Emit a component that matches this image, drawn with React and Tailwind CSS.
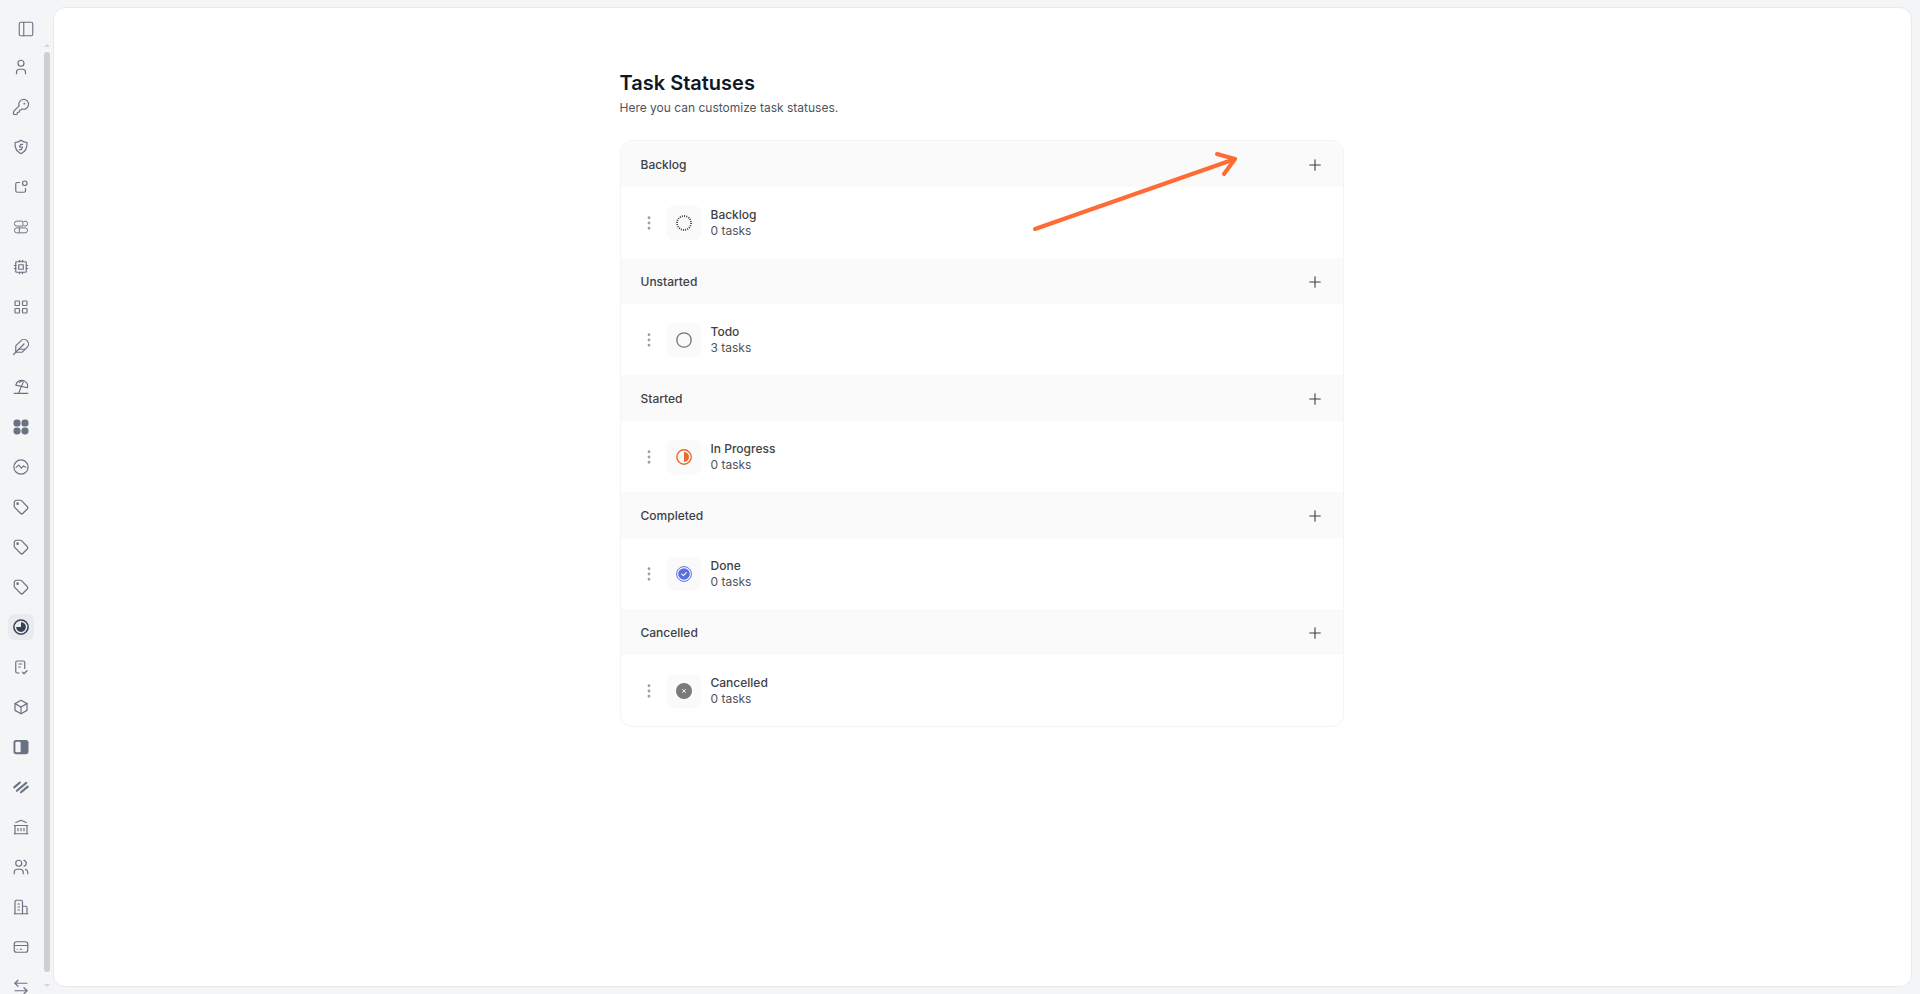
import { Plus, EllipsisVertical, PanelLeft, KeyRound, ArrowLeftRight, Feather } from 'lucide-react'
import {
  TbUser,
  TbNotification,
  TbCpu,
  TbLayoutGrid,
  TbTag,
  TbChecklist,
  TbBox,
  TbBuildingBank,
  TbUsers,
  TbCreditCard,
} from 'react-icons/tb'

function ShieldBolt({ size, strokeWidth, ...props }) {
  return (
    <svg viewBox="0 0 24 24" fill="none" stroke="currentColor" strokeWidth="1.6" strokeLinecap="round" strokeLinejoin="round" {...props}>
      <path d="M12 3c2.3 2 5 3 8 3 .5 6.5-2 12-8 15-6-3-8.5-8.5-8-15 3 0 5.7-1 8-3z" />
      <path d="M14 8.5h-2.5L10 12h4l-1.5 3.5H10" />
    </svg>
  )
}

function Pills({ size, strokeWidth, ...props }) {
  return (
    <svg viewBox="0 0 24 24" fill="none" stroke="currentColor" strokeWidth="1.3" {...props}>
      <path d="M14.500 4.200H6.500a3.300 3.300 0 0 0 0 6.600h8" />
      <circle cx="17.500" cy="7.500" r="3.300" />
      <rect x="3.200" y="13.200" width="17.600" height="6.600" rx="3.300" />
      <path d="M9.800 13.200v6.600" />
    </svg>
  )
}

function Umbrella({ size, strokeWidth, ...props }) {
  return (
    <svg viewBox="0 0 24 24" fill="none" stroke="currentColor" strokeWidth="1.5" strokeLinecap="round" strokeLinejoin="round" {...props}>
      <path d="M5 9.500C6 4 12.500 1.500 17.500 4.500c3 2 4 5 3 8.500z" />
      <path d="M10 6c1-1.500 3-2.500 5-2.500M12.500 11.200 15 5.500" />
      <path d="M12.500 11.200 9 20" />
      <path d="M3 20.500h18" />
    </svg>
  )
}

function Clover({ size, strokeWidth, ...props }) {
  return (
    <svg viewBox="0 0 24 24" fill="currentColor" {...props}>
      <rect x="2" y="2" width="9.400" height="9.400" rx="4.200" />
      <rect x="12.600" y="2" width="9.400" height="9.400" rx="4.200" />
      <rect x="2" y="12.600" width="9.400" height="9.400" rx="4.200" />
      <rect x="12.600" y="12.600" width="9.400" height="9.400" rx="4.200" />
    </svg>
  )
}

function WaveCircle({ size, strokeWidth, ...props }) {
  return (
    <svg viewBox="0 0 24 24" fill="none" stroke="currentColor" strokeWidth="1.6" strokeLinecap="round" strokeLinejoin="round" {...props}>
      <circle cx="12" cy="12" r="9.500" />
      <path d="M5.500 12.500 9 9.500l3.500 4 3-3 3 2" />
    </svg>
  )
}

function PieCircle({ size, strokeWidth, ...props }) {
  return (
    <svg viewBox="0 0 24 24" fill="none" {...props}>
      <circle cx="12" cy="12" r="9.500" stroke="currentColor" strokeWidth="2" />
      <path d="M12 5.500a6.500 6.500 0 1 1-6.500 6.500H12z" fill="currentColor" />
    </svg>
  )
}

function HalfSquare({ size, strokeWidth, ...props }) {
  return (
    <svg viewBox="0 0 24 24" fill="none" {...props}>
      <rect x="2" y="2.500" width="20" height="19" rx="3.500" fill="currentColor" />
      <rect x="4.500" y="5" width="7" height="14" rx="1.500" fill="#f4f5f7" />
    </svg>
  )
}

function Stripes({ size, strokeWidth, ...props }) {
  return (
    <svg viewBox="0 0 24 24" fill="none" stroke="currentColor" strokeWidth="2.800" strokeLinecap="round" {...props}>
      <path d="M3 12.500 10.500 6" />
      <path d="M6.500 17 19 6.500" />
      <path d="M12 19l9-7.500" />
    </svg>
  )
}

function Office({ size, strokeWidth, ...props }) {
  return (
    <svg viewBox="0 0 24 24" fill="none" stroke="currentColor" strokeWidth="1.6" strokeLinecap="round" strokeLinejoin="round" {...props}>
      <path d="M4 21V5a2 2 0 0 1 2-2h6a2 2 0 0 1 2 2v16" />
      <path d="M14 11h4a2 2 0 0 1 2 2v8" />
      <path d="M3 21h18" />
      <path d="M8 8h2M8 12h2M8 16h2" />
    </svg>
  )
}

const navIcons = [
  TbUser,
  KeyRound,
  ShieldBolt,
  TbNotification,
  Pills,
  TbCpu,
  TbLayoutGrid,
  Feather,
  Umbrella,
  Clover,
  WaveCircle,
  TbTag,
  TbTag,
  TbTag,
  PieCircle,
  TbChecklist,
  TbBox,
  HalfSquare,
  Stripes,
  TbBuildingBank,
  TbUsers,
  Office,
  TbCreditCard,
  ArrowLeftRight,
]

function Sidebar() {
  return (
    <aside className="flex h-full w-[53px] shrink-0 overflow-hidden">
      <div className="flex w-[44px] shrink-0 flex-col">
        <div className="flex h-[47px] shrink-0 items-start justify-end pr-[9px] pt-[20px]">
          <PanelLeft size={18} strokeWidth={1.5} className="text-gray-500" />
        </div>
        <div className="flex flex-col">
          {navIcons.map((Icon, i) => (
            <div key={i} className="flex h-[40px] shrink-0 items-center justify-center pr-[3px]">
              <div
                className={
                  'flex h-[26px] w-[26px] items-center justify-center rounded-md ' +
                  (Icon === PieCircle ? 'bg-gray-200/70 text-gray-700' : 'text-gray-500')
                }
              >
                <Icon size={18} strokeWidth={1.6} className="h-[18px] w-[18px]" />
              </div>
            </div>
          ))}
        </div>
      </div>
      <div className="flex w-[6px] shrink-0 flex-col items-center pt-[44px]">
        <div className="h-0 w-0 border-x-[3px] border-b-[3px] border-x-transparent border-b-gray-300" />
        <div className="mt-[5px] h-[920px] w-[6px] rounded-sm bg-[#cfcfcf]" />
        <div className="mt-[12px] h-0 w-0 border-x-[3px] border-t-[3px] border-x-transparent border-t-gray-300" />
      </div>
    </aside>
  )
}

function BacklogIcon() {
  return (
    <svg width="16" height="16" viewBox="0 0 16 16" fill="none">
      <circle cx="8" cy="8" r="7" stroke="#27272a" strokeWidth="1.800" strokeDasharray="0.9 1.300" />
    </svg>
  )
}

function TodoIcon() {
  return (
    <svg width="16" height="16" viewBox="0 0 16 16" fill="none">
      <circle cx="8" cy="8" r="7.200" stroke="#71717a" strokeWidth="1.300" />
    </svg>
  )
}

function ProgressIcon() {
  return (
    <svg width="16" height="16" viewBox="0 0 16 16" fill="none">
      <circle cx="8" cy="8" r="7.200" stroke="#e86a2c" strokeWidth="1.400" />
      <path d="M8 3a5 5 0 0 1 0 10z" fill="#e86a2c" />
    </svg>
  )
}

function DoneIcon() {
  return (
    <svg width="16" height="16" viewBox="0 0 16 16" fill="none">
      <circle cx="8" cy="8" r="7.400" stroke="#5b6ee1" strokeWidth="1" />
      <circle cx="8" cy="8" r="5.800" fill="#5b6ee1" />
      <path d="M5.800 8.100 7.400 9.600l2.800-3" stroke="#fff" strokeWidth="1.100" strokeLinecap="round" strokeLinejoin="round" />
    </svg>
  )
}

function CancelledIcon() {
  return (
    <svg width="16" height="16" viewBox="0 0 16 16" fill="none">
      <circle cx="8" cy="8" r="8" fill="#7a7a7a" />
      <path d="M6.500 6.500l3 3M9.500 6.500l-3 3" stroke="#fff" strokeWidth="0.900" strokeLinecap="round" />
    </svg>
  )
}

const groups = [
  { title: 'Backlog', name: 'Backlog', tasks: '0 tasks', icon: <BacklogIcon /> },
  { title: 'Unstarted', name: 'Todo', tasks: '3 tasks', icon: <TodoIcon /> },
  { title: 'Started', name: 'In Progress', tasks: '0 tasks', icon: <ProgressIcon /> },
  { title: 'Completed', name: 'Done', tasks: '0 tasks', icon: <DoneIcon /> },
  { title: 'Cancelled', name: 'Cancelled', tasks: '0 tasks', icon: <CancelledIcon /> },
]

function StatusGroup({ group }) {
  return (
    <div>
      <div className="flex h-[46px] items-center justify-between bg-[#fafafa] px-[20px] pt-[1px]">
        <span className="text-[12px] font-medium text-[#3f3f46]">{group.title}</span>
        <Plus size={18} strokeWidth={1.5} className="mr-[-1px] text-[#3f3f46]" />
      </div>
      <div className="flex h-[71px] items-center pl-[19px]">
        <EllipsisVertical size={18} strokeWidth={1.8} className="text-gray-400" />
        <div className="ml-[9px] flex h-[34px] w-[34px] items-center justify-center rounded-md bg-[#fafafa]">
          {group.icon}
        </div>
        <div className="ml-[10px] text-[12px] leading-[16px]">
          <div className="font-medium text-[#3f3f46]">{group.name}</div>
          <div className="text-[#52525b]">{group.tasks}</div>
        </div>
      </div>
    </div>
  )
}

export default function App() {
  return (
    <div className="flex h-screen overflow-hidden bg-[#f4f5f7] font-['Inter',sans-serif]">
      <Sidebar />
      <div className="mb-[7px] mr-[8px] mt-[7px] flex-1 rounded-xl border border-[#e8e9ec] bg-white pr-[2px]">
        <main className="relative mx-auto mt-[62px] w-[724px]">
          <h1 className="text-[20px] font-semibold leading-[26px] text-gray-900">Task Statuses</h1>
          <p className="mt-[2px] text-[12px] leading-[20px] text-[#52525b]">
            Here you can customize task statuses.
          </p>
          <div className="mt-[22px] overflow-hidden rounded-xl border border-gray-100">
            {groups.map((g) => (
              <StatusGroup key={g.title} group={g} />
            ))}
          </div>
          <svg
            className="absolute left-[410px] top-[76px]"
            width="210"
            height="90"
            viewBox="0 0 210 90"
            fill="none"
            stroke="#ff6b35"
            strokeWidth="4"
            strokeLinecap="round"
            strokeLinejoin="round"
          >
            <path d="M5 83 205 13" />
            <path d="M187 8 205 13 194 28" />
          </svg>
        </main>
      </div>
    </div>
  )
}
